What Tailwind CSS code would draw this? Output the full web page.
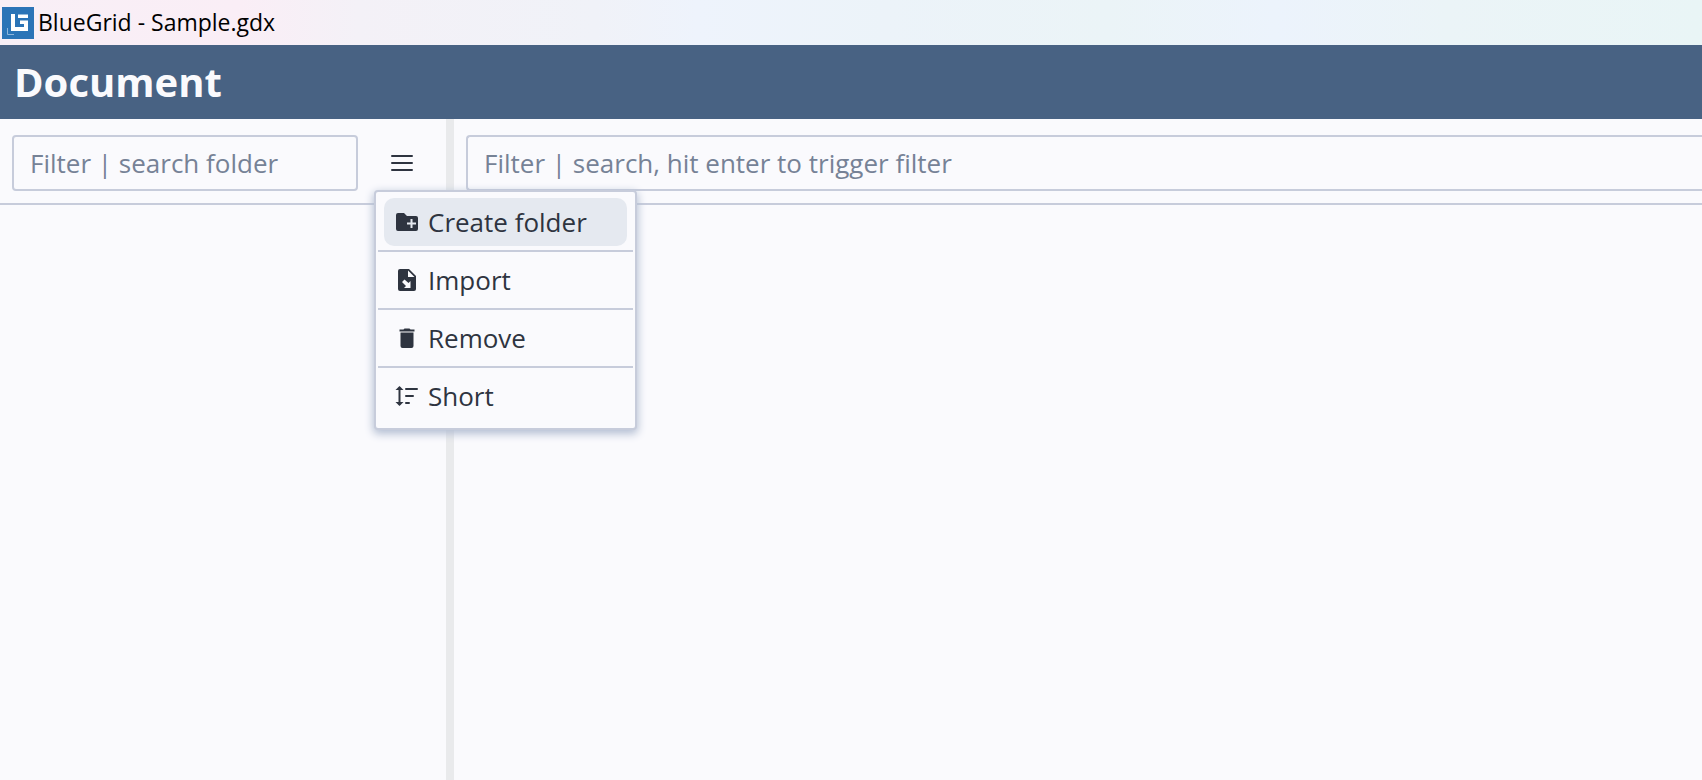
<!DOCTYPE html>
<html lang="en">
<head>
<meta charset="utf-8">
<meta name="viewport" content="width=device-width, initial-scale=1">
<title>BlueGrid - Sample.gdx</title>
<script src="https://cdn.jsdelivr.net/npm/@tailwindcss/browser@4"></script>
</head>
<body class="flex min-h-screen flex-col overflow-x-hidden bg-[#fafafd] font-['Open_Sans','Noto_Sans',sans-serif] text-[#2e3440]">
  <div class="flex h-[45px] items-center gap-1 bg-[linear-gradient(to_right,#f8eff6,#faeef6_14%,#f4f1f7_21%,#f0f2f8_35%,#eef3fc_41%,#ecf3f9_52%,#ebf4f7_65%,#ecf3fc_75%,#ebf4f7_85%,#e9f5f6)] pl-0.5 text-[23px] text-black">
    <svg class="size-8 shrink-0" viewBox="0 0 32 32" aria-hidden="true">
      <path fill="#2b74b7" d="M0 0h32v32H0z"/>
      <path fill="#fff" d="M9 7h4v13h9v-3h-4v-3.500h8V24H9zM16 7.500h10V11H16z"/>
      <path fill="none" stroke="#8fb6dc" d="M5.500 21v6.500H12"/>
    </svg>
    <span>BlueGrid - Sample.gdx</span>
  </div>
  <header class="flex h-[74px] items-center bg-[#486283] px-3.5 text-[#fafafd]">
    <h1 class="text-[40px] leading-none font-bold">Document</h1>
  </header>
  <main class="flex grow">
    <section class="w-[446px] shrink-0" aria-label="Folders">
      <div class="flex h-[86px] items-start border-b-2 border-[#c7ccdb] pt-4 pl-3">
        <input type="text" aria-label="Search folder" placeholder="Filter | search folder" class="h-14 w-[346px] rounded-sm border-2 border-[#c7ccdb] px-4 text-[26px] placeholder:text-[#768296]">
        <div class="relative flex grow justify-center">
          <button type="button" aria-label="Folder menu" aria-haspopup="menu" class="flex size-14 items-center justify-center">
            <svg class="h-4 w-[22px]" viewBox="0 0 22 16" fill="none" stroke="#2e3440" stroke-width="2" stroke-linecap="round" aria-hidden="true"><path d="M1 1h20M1 8h20M1 15h20"/></svg>
          </button>
          <div role="menu" class="absolute top-[55px] left-4 z-10 w-[263px] divide-y-2 divide-[#c7ccdb] rounded-sm border-2 border-[#c7ccdb] bg-[#fafafd] p-0.5 text-[26px] shadow-[0_3px_8px_1px_#b4bfd3]">
            <div class="px-1.5 py-1">
              <button type="button" role="menuitem" class="flex h-12 w-full items-center gap-[9px] rounded-[10px] bg-[#e5e9f0] pl-[11px]">
                <svg class="size-6" viewBox="0 0 24 24" aria-hidden="true"><path fill="#2e3440" d="M3 3h6l3 3h9q2 0 2 2v11q0 2-2 2H3q-2 0-2-2V5q0-2 2-2z"/><path stroke="#e5e9f0" stroke-width="2" d="M16.500 9v9M12 13.500h9"/></svg>
                <span>Create folder</span>
              </button>
            </div>
            <div class="px-1.5 py-1">
              <button type="button" role="menuitem" class="flex h-12 w-full items-center gap-[9px] rounded-[10px] pl-[11px]">
                <svg class="size-6" viewBox="0 0 24 24" aria-hidden="true"><path fill="#2e3440" d="M5 1h9l7 7v13q0 2-2 2H5q-2 0-2-2V3q0-2 2-2z"/><path fill="#fafafd" d="M13 2.500V9h6.500zM7 14l2.500-2.500 4 3.500 2-2V20H9l2-2z"/></svg>
                <span>Import</span>
              </button>
            </div>
            <div class="px-1.5 py-1">
              <button type="button" role="menuitem" class="flex h-12 w-full items-center gap-[9px] rounded-[10px] pl-[11px]">
                <svg class="size-6" viewBox="0 0 24 24" fill="#2e3440" aria-hidden="true"><path d="M4.500 3.500h4l1-1h5l1 1h4v2h-15zM5.500 6.500h13V20q0 2-2 2h-9q-2 0-2-2z"/></svg>
                <span>Remove</span>
              </button>
            </div>
            <div class="px-1.5 pt-1 pb-1.5">
              <button type="button" role="menuitem" class="flex h-12 w-full items-center gap-[9px] rounded-[10px] pl-[11px]">
                <svg class="size-6" viewBox="0 0 24 24" fill="none" stroke="#2e3440" stroke-width="2" stroke-linecap="round" aria-hidden="true"><path d="M11 5h11M11 12h7M11 19h3M4.500 4v16"/><path fill="#2e3440" stroke="none" d="M4.500 2L8.500 6h-8zM4.500 22l4-4h-8z"/></svg>
                <span>Short</span>
              </button>
            </div>
          </div>
        </div>
      </div>
    </section>
    <div class="w-2 shrink-0 bg-[#e9eaec]" role="separator" aria-orientation="vertical"></div>
    <section class="min-w-0 grow" aria-label="Documents">
      <div class="flex h-[86px] items-start border-b-2 border-[#c7ccdb] pt-4 pl-3">
        <input type="text" aria-label="Search documents" placeholder="Filter | search, hit enter to trigger filter" class="h-14 w-full rounded-l-sm border-2 border-r-0 border-[#c7ccdb] px-4 text-[26px] placeholder:text-[#768296]">
      </div>
    </section>
  </main>
</body>
</html>
